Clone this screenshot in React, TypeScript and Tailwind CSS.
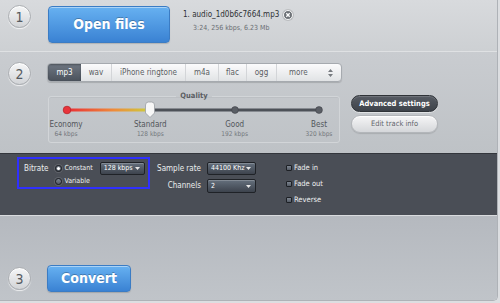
import React from "react";

const FONT = "font-['DejaVu_Sans_Condensed','DejaVu_Sans',sans-serif]";

function Step({ n }: { n: string }) {
  return (
    <div className="w-[23px] h-[23px] shrink-0 rounded-full border border-[#abaeb2] bg-linear-to-b from-[#f6f7f8] to-[#d2d4d7] shadow-[inset_0_1px_0_#ffffff,0_1px_1px_rgba(255,255,255,0.7)] flex items-center justify-center text-[14px] leading-none text-[#555a60]">
      {n}
    </div>
  );
}

function BlueButton({ label, w, h, size }: { label: string; w: string; h: string; size: string }) {
  return (
    <div
      className={`${w} ${h} ${size} shrink-0 rounded-[4px] border border-[#3b7cc4] bg-linear-to-b from-[#67b1f1] to-[#3a82d3] shadow-[inset_0_1px_0_rgba(255,255,255,0.45),0_1px_1px_rgba(0,0,0,0.15)] flex items-center justify-center font-bold text-white [text-shadow:0_-1px_0_rgba(0,0,0,0.25)]`}
    >
      {label}
    </div>
  );
}

function Select({ value, w, h }: { value: string; w: string; h: string }) {
  return (
    <div
      className={`${w} ${h} shrink-0 rounded-[2px] border border-[#1f2227] bg-linear-to-b from-[#65707d] to-[#3d434d] shadow-[inset_0_1px_0_rgba(255,255,255,0.2)] flex items-center justify-between pl-[3px] pr-[4px] text-[7px] text-white whitespace-nowrap`}
    >
      <span>{value}</span>
      <svg width="5" height="3" viewBox="0 0 5 3">
        <path d="M0 0 H5 L2.5 3 Z" fill="#e8e8e8" />
      </svg>
    </div>
  );
}

function Radio({ checked }: { checked?: boolean }) {
  return (
    <div className="w-[7px] h-[7px] shrink-0 rounded-full border border-[#1d2025] bg-linear-to-b from-[#7d8590] to-[#535a64] flex items-center justify-center shadow-[0_0_0_1px_rgba(255,255,255,0.12)]">
      {checked && <div className="w-[3px] h-[3px] rounded-full bg-white" />}
    </div>
  );
}

function Check({ label }: { label: string }) {
  return (
    <div className="h-[16px] flex items-center">
      <div className="w-[6px] h-[6px] shrink-0 rounded-[1px] border border-[#1d2025] bg-linear-to-b from-[#7d8590] to-[#535a64]" />
      <span className="ml-[2px] text-[7.5px] text-[#eceef0] whitespace-nowrap">{label}</span>
    </div>
  );
}

const tabs = [
  { label: "mp3", w: "w-[33px]", active: true },
  { label: "wav", w: "w-[31px]" },
  { label: "iPhone ringtone", w: "w-[74px]" },
  { label: "m4a", w: "w-[33px]" },
  { label: "flac", w: "w-[28px]" },
  { label: "ogg", w: "w-[30px]" },
];

const levels = [
  { name: "Economy", rate: "64 kbps" },
  { name: "Standard", rate: "128 kbps" },
  { name: "Good", rate: "192 kbps" },
  { name: "Best", rate: "320 kbps" },
];

export default function App() {
  return (
    <div className={`w-[500px] h-[303px] bg-[#dcdee1] overflow-hidden ${FONT}`}>
      <div className="w-[498px] h-[301px] flex flex-col overflow-hidden rounded-br-[5px] border-r border-b border-[#aeb2b7]">
        {/* Section 1 */}
        <div className="h-[52px] shrink-0 flex items-start pl-[8px] pt-[5px] bg-linear-to-b from-[#d8dadd] to-[#cdd0d3] border-b border-[#dfe1e3] shadow-[0_1px_0_#bfc2c6]">
          <Step n="1" />
          <div className="ml-[17px] mt-[1px]">
            <BlueButton label="Open files" w="w-[122px]" h="h-[37px]" size="text-[14px]" />
          </div>
          <div className="ml-[13px] mt-[3px] flex flex-col">
            <div className="flex items-center h-[14px]">
              <span className="text-[8px] text-[#2e3135] whitespace-nowrap">1. audio_1d0b6c7664.mp3</span>
              <div className="ml-[4px] w-[10px] h-[10px] rounded-full bg-[#6e7277] border border-[#f4f5f6] shadow-[0_0_0_1px_rgba(0,0,0,0.12)] flex items-center justify-center">
                <svg width="6" height="6" viewBox="0 0 6 6">
                  <path d="M1.3 1.3 L4.7 4.7 M4.7 1.3 L1.3 4.7" stroke="#fff" strokeWidth="1.3" />
                </svg>
              </div>
            </div>
            <span className="ml-[10px] mt-[1px] text-[7px] text-[#6a6e73] whitespace-nowrap">3:24, 256 kbps, 6.23 Mb</span>
          </div>
        </div>

        {/* Section 2 */}
        <div className="h-[101px] shrink-0 flex items-start pl-[8px] bg-linear-to-b from-[#c9ccd0] to-[#bec2c6]">
          <div className="mt-[10px]">
            <Step n="2" />
          </div>
          <div className="ml-[16px] mt-[11px] flex flex-col">
            {/* Tabs */}
            <div className="flex h-[19px] w-[295px] rounded-[4px] border border-[#a6aaaf] bg-linear-to-b from-[#fbfbfc] to-[#e1e3e5] shadow-[0_1px_1px_rgba(0,0,0,0.15)] overflow-hidden text-[8px]">
              {tabs.map((t) =>
                t.active ? (
                  <div
                    key={t.label}
                    className={`${t.w} h-full shrink-0 flex items-center justify-center bg-linear-to-b from-[#6f7782] to-[#4b525c] text-white shadow-[inset_0_1px_2px_rgba(0,0,0,0.3)]`}
                  >
                    {t.label}
                  </div>
                ) : (
                  <div
                    key={t.label}
                    className={`${t.w} h-full shrink-0 flex items-center justify-center border-r border-[#d3d5d8] text-[#5a5e63] whitespace-nowrap`}
                  >
                    {t.label}
                  </div>
                )
              )}
              <div className="flex-1 h-full flex items-center justify-between pl-[12px] pr-[8px] text-[#5a5e63]">
                <span>more</span>
                <svg width="5" height="8" viewBox="0 0 5 8">
                  <path d="M0 3 L2.5 0 L5 3 Z M0 5 L2.5 8 L5 5 Z" fill="#777b80" />
                </svg>
              </div>
            </div>

            <div className="flex items-start mt-[9px]">
              {/* Quality */}
              <fieldset className="ml-[1px] w-[290px] h-[52px] rounded-[3px] border border-[#d2d5d8] shadow-[inset_0_1px_0_rgba(0,0,0,0.04)]">
                <legend className="mx-auto px-[4px] text-[7.5px] font-bold text-[#5a5e63] leading-[10px]">Quality</legend>
                <svg width="288" height="18" viewBox="0 0 288 18" className="block">
                  <defs>
                    <linearGradient id="q" x1="0" x2="1" y1="0" y2="0">
                      <stop offset="0" stopColor="#ea2d35" />
                      <stop offset="0.55" stopColor="#ef8a3a" />
                      <stop offset="1" stopColor="#cbd03c" />
                    </linearGradient>
                  </defs>
                  <rect x="101" y="7.5" width="169" height="3" fill="#4d5158" />
                  <rect x="18" y="7.5" width="84" height="3" fill="url(#q)" />
                  <circle cx="18" cy="9" r="3.8" fill="#e8343b" stroke="#b8262b" strokeWidth="0.8" />
                  <circle cx="186" cy="9" r="3.4" fill="#5a5e65" stroke="#3f4248" strokeWidth="0.6" />
                  <circle cx="270" cy="9" r="3.4" fill="#5a5e65" stroke="#3f4248" strokeWidth="0.6" />
                  <path
                    d="M96.5 4 Q96.5 1 99.5 1 H102.5 Q105.5 1 105.5 4 V12 L101 16.5 L96.5 12 Z"
                    fill="#f7f7f7"
                    stroke="#9a9ea3"
                    strokeWidth="0.8"
                  />
                </svg>
                <div className="ml-[-3px] w-[293px] mt-[1px] flex justify-between">
                  {levels.map((l) => (
                    <div key={l.name} className="w-[40px] flex flex-col items-center">
                      <span className="text-[8px] leading-[10px] text-[#52565b]">{l.name}</span>
                      <span className="text-[6.5px] leading-[8px] text-[#74787d] whitespace-nowrap">{l.rate}</span>
                    </div>
                  ))}
                </div>
              </fieldset>

              {/* Buttons */}
              <div className="ml-[11px] mt-[4px] flex flex-col gap-[3px]">
                <div className="w-[87px] h-[17px] rounded-full border border-[#2f3338] bg-linear-to-b from-[#575c64] to-[#3e434a] shadow-[inset_0_1px_0_rgba(255,255,255,0.15),0_1px_0_rgba(255,255,255,0.5)] flex items-center justify-center text-[7.5px] font-bold text-white whitespace-nowrap">
                  Advanced settings
                </div>
                <div className="w-[87px] h-[18px] rounded-full border border-[#b3b6ba] bg-linear-to-b from-[#f6f6f7] to-[#d5d7da] shadow-[inset_0_1px_0_#ffffff,0_1px_1px_rgba(0,0,0,0.12)] flex items-center justify-center text-[7.5px] text-[#62666b] whitespace-nowrap">
                  Edit track info
                </div>
              </div>
            </div>
          </div>
        </div>

        {/* Dark panel */}
        <div className="h-[63px] shrink-0 flex items-start pl-[17px] pt-[3px] bg-[#4a4e56] border-t border-[#33363c] border-b border-b-[#d9dbde]">
          <div className="w-[133px] h-[32px] shrink-0 border-2 border-[#3030ff] flex items-start pt-[3px] pl-[5px]">
            <div className="h-[13px] flex items-center text-[8px] text-[#eceef0]">Bitrate</div>
            <div className="ml-[7px] flex flex-col">
              <div className="h-[13px] flex items-center">
                <Radio checked />
                <span className="ml-[2px] text-[7px] text-[#eceef0]">Constant</span>
                <div className="ml-[7px]">
                  <Select value="128 kbps" w="w-[45px]" h="h-[13px]" />
                </div>
              </div>
              <div className="h-[13px] flex items-center">
                <Radio />
                <span className="ml-[2px] text-[7px] text-[#eceef0]">Variable</span>
              </div>
            </div>
          </div>

          <div className="ml-[7px] mt-[5px] flex flex-col gap-[4px]">
            <div className="h-[13px] flex items-center">
              <span className="w-[44px] text-right text-[8px] text-[#eceef0] whitespace-nowrap">Sample rate</span>
              <div className="ml-[6px]">
                <Select value="44100 Khz" w="w-[49px]" h="h-[13px]" />
              </div>
            </div>
            <div className="h-[14px] flex items-center">
              <span className="w-[44px] text-right text-[8px] text-[#eceef0] whitespace-nowrap">Channels</span>
              <div className="ml-[6px]">
                <Select value="2" w="w-[49px]" h="h-[14px]" />
              </div>
            </div>
          </div>

          <div className="ml-[30px] mt-[3px] flex flex-col">
            <Check label="Fade in" />
            <Check label="Fade out" />
            <Check label="Reverse" />
          </div>
        </div>

        {/* Section 3 */}
        <div className="flex-1 flex flex-col justify-end bg-linear-to-b from-[#b5b9bf] to-[#c0c4c9]">
          <div className="flex items-center pl-[8px] mb-[8px]">
            <Step n="3" />
            <div className="ml-[16px]">
              <BlueButton label="Convert" w="w-[84px]" h="h-[27px]" size="text-[14px]" />
            </div>
          </div>
        </div>
      </div>
    </div>
  );
}
